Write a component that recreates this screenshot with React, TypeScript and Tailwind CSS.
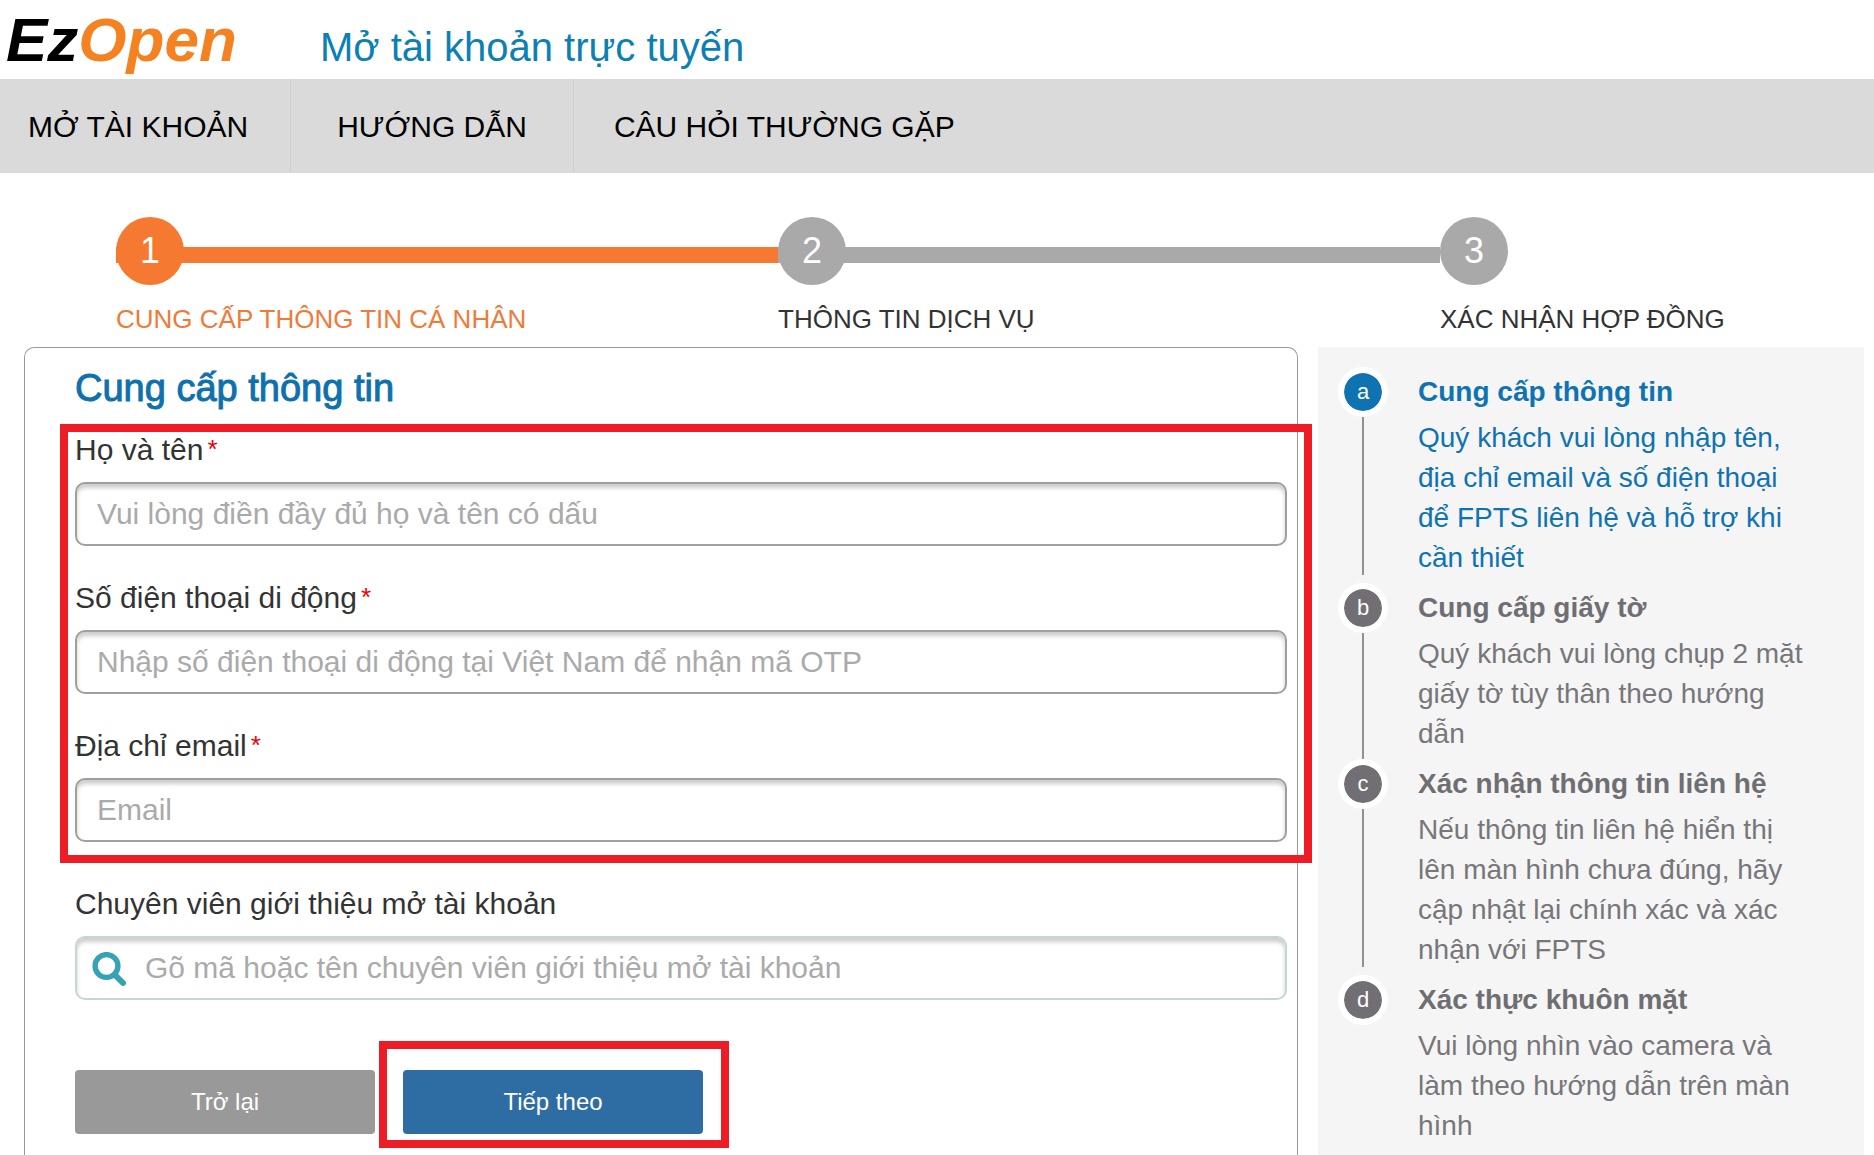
import { useState } from 'react';
import clsx from 'clsx';

const NAV = [
  { label: 'MỞ TÀI KHOẢN', href: '#mo-tai-khoan', box: 'border-r pl-7 pr-[42px]' },
  { label: 'HƯỚNG DẪN', href: '#huong-dan', box: 'border-r pl-[46px] pr-[46px]' },
  { label: 'CÂU HỎI THƯỜNG GẶP', href: '#cau-hoi', box: 'pl-10 pr-10' },
];

const STEPS = ['CUNG CẤP THÔNG TIN CÁ NHÂN', 'THÔNG TIN DỊCH VỤ', 'XÁC NHẬN HỢP ĐỒNG'];

const FIELDS = [
  { id: 'name', type: 'text', label: 'Họ và tên', placeholder: 'Vui lòng điền đầy đủ họ và tên có dấu' },
  { id: 'phone', type: 'tel', label: 'Số điện thoại di động', placeholder: 'Nhập số điện thoại di động tại Việt Nam để nhận mã OTP' },
  { id: 'email', type: 'email', label: 'Địa chỉ email', placeholder: 'Email' },
];

const GUIDE = [
  {
    mark: 'a',
    title: 'Cung cấp thông tin',
    text: 'Quý khách vui lòng nhập tên, địa chỉ email và số điện thoại để FPTS liên hệ và hỗ trợ khi cần thiết',
  },
  { mark: 'b', title: 'Cung cấp giấy tờ', text: 'Quý khách vui lòng chụp 2 mặt giấy tờ tùy thân theo hướng dẫn' },
  {
    mark: 'c',
    title: 'Xác nhận thông tin liên hệ',
    text: 'Nếu thông tin liên hệ hiển thị lên màn hình chưa đúng, hãy cập nhật lại chính xác và xác nhận với FPTS',
  },
  { mark: 'd', title: 'Xác thực khuôn mặt', text: 'Vui lòng nhìn vào camera và làm theo hướng dẫn trên màn hình' },
];

const inputClass =
  'block w-full h-16 rounded-[10px] border-2 bg-white text-[30px] text-[#333] placeholder:text-[#aaa] placeholder:opacity-100 shadow-[inset_0_4px_4px_rgba(0,0,0,0.2)] outline-none';

export default function App() {
  const [values, setValues] = useState<Record<string, string>>({});
  const set = (id: string, v: string) => setValues((prev) => ({ ...prev, [id]: v }));

  return (
    <div className="min-h-screen flex flex-col bg-white overflow-x-hidden text-[#333] font-['Liberation_Sans',Arial,sans-serif]">
      <header className="h-[79px] flex items-baseline pl-[6px]">
        <a href="#" className="text-[62px] leading-[80px] font-bold italic text-black w-[314px]">
          Ez<span className="text-[#f58220]">Open</span>
        </a>
        <h1 className="text-[40px] text-[#0b80b5]">Mở tài khoản trực tuyến</h1>
      </header>

      <nav className="flex h-[94px] bg-[#dadada]">
        {NAV.map((n) => (
          <a key={n.href} href={n.href} className={clsx('flex items-center border-[#d0d0d0] text-[30px] text-black', n.box)}>
            {n.label}
          </a>
        ))}
      </nav>

      <Steps current={0} />

      <main className="flex-1 flex gap-5 pl-6 pr-[10px]">
        <form
          className="flex-1 border border-b-0 border-[#999] rounded-t-[10px] pt-4 pl-[50px] pr-[10px]"
          onSubmit={(e) => e.preventDefault()}
        >
          <h2 className="text-[38px] leading-[48px] text-[#0e71ae] [-webkit-text-stroke:1px] mb-[18px]">Cung cấp thông tin</h2>

          <div className="relative space-y-8">
            {FIELDS.map((f) => (
              <div key={f.id}>
                <label htmlFor={f.id} className="block text-[30px] leading-10 mb-3">
                  {f.label}
                  <sup className="text-[26px] leading-none top-0 align-[2px] text-[#f00000] ml-1">*</sup>
                </label>
                <input
                  id={f.id}
                  type={f.type}
                  placeholder={f.placeholder}
                  value={values[f.id] ?? ''}
                  onChange={(e) => set(f.id, e.target.value)}
                  className={clsx(inputClass, 'border-[#a09e9f] px-5')}
                />
              </div>
            ))}
            <Highlight className="-top-[6px] -bottom-[21px] -left-[15px] -right-[25px]" />
          </div>

          <div className="mt-[42px]">
            <label htmlFor="broker" className="block text-[30px] leading-10 mb-3">
              Chuyên viên giới thiệu mở tài khoản
            </label>
            <div className="relative">
              <SearchIcon />
              <input
                id="broker"
                type="text"
                placeholder="Gõ mã hoặc tên chuyên viên giới thiệu mở tài khoản"
                value={values.broker ?? ''}
                onChange={(e) => set('broker', e.target.value)}
                className={clsx(inputClass, 'border-[#c3d7d5] pl-[68px] pr-5')}
              />
            </div>
          </div>

          <div className="flex gap-7 mt-[70px] text-2xl text-white">
            <button type="button" className="w-[300px] h-16 rounded bg-[#999]">Trở lại</button>
            <div className="relative">
              <button type="submit" className="w-[300px] h-16 rounded bg-[#2e6da4]">Tiếp theo</button>
              <Highlight className="-top-[29px] -bottom-[14px] -left-[24px] -right-[26px]" />
            </div>
          </div>
        </form>

        <aside className="w-[546px] shrink-0 bg-[#f5f5f5] pt-[25px]">
          <ol>
            {GUIDE.map((g, i) => (
              <GuideItem key={g.mark} {...g} active={i === 0} last={i === GUIDE.length - 1} />
            ))}
          </ol>
        </aside>
      </main>
    </div>
  );
}

function Steps({ current }: { current: number }) {
  return (
    <ol className="flex pl-[116px] pt-11 pb-[10px]">
      {STEPS.map((s, i) => {
        const active = i === current;
        const last = i === STEPS.length - 1;
        return (
          <li key={s} className={last ? 'w-[434px]' : 'flex-1'}>
            <div className="relative">
              {!last && <div className={clsx('absolute top-[30px] inset-x-0 h-4', active ? 'bg-[#f57930]' : 'bg-[#a9a9a9]')} />}
              <div
                className={clsx(
                  'relative size-[68px] rounded-full flex items-center justify-center text-4xl text-white',
                  active ? 'bg-[#f57930]' : 'bg-[#a9a9a9]',
                )}
              >
                {i + 1}
              </div>
            </div>
            <div className={clsx('text-[26px] leading-9 mt-4 whitespace-nowrap', active && 'text-[#f07a38]')}>{s}</div>
          </li>
        );
      })}
    </ol>
  );
}

function GuideItem({ mark, title, text, active, last }: { mark: string; title: string; text: string; active: boolean; last: boolean }) {
  return (
    <li
      className={clsx(
        'relative pl-[100px] pr-[52px] text-[28px] leading-10',
        last ? 'pb-2' : 'pb-[10px]',
        active ? 'text-[#0e73b0]' : 'text-[#77767a]',
      )}
    >
      {!last && <div className="absolute left-11 top-[43px] w-[2px] h-40 bg-[#929294]" />}
      <div
        className={clsx(
          'absolute z-10 left-5 -top-[5px] size-[50px] rounded-full border-[6px] border-white flex items-center justify-center text-[22px] leading-none text-white bg-clip-padding',
          active ? 'bg-[#0e73b0]' : 'bg-[#716f74]',
        )}
      >
        {mark}
      </div>
      <h3 className={clsx('font-bold mb-[6px]', !active && 'text-[#6f6e72]')}>{title}</h3>
      <p>{text}</p>
    </li>
  );
}

// red frame drawn around the parts the customer has to fill in or press
function Highlight({ className }: { className: string }) {
  return <div className={clsx('absolute pointer-events-none z-20 border-8 border-[#ee1c24]', className)} />;
}

function SearchIcon() {
  return (
    <svg className="absolute left-[17px] top-4 size-[34px]" viewBox="0 0 34 34" fill="none" stroke="#35a3b3" aria-hidden="true">
      <circle cx="14.5" cy="14" r="11.4" strokeWidth="5.4" />
      <path d="M22.5 22.5L31 31" strokeWidth="6" strokeLinecap="round" />
    </svg>
  );
}
